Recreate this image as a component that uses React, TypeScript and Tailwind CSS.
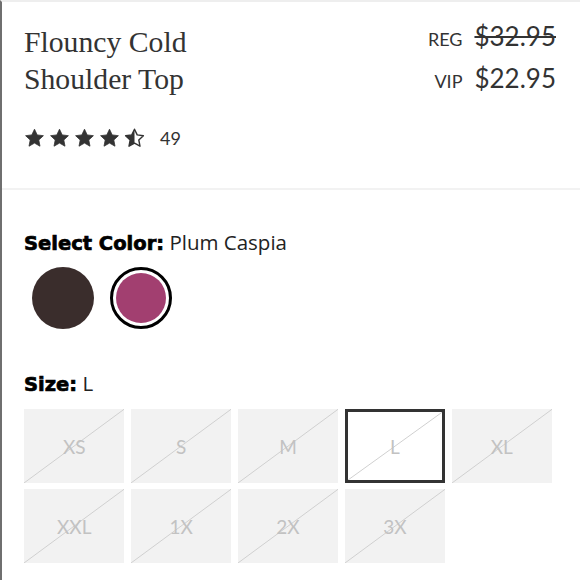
import React from "react";

const STAR = "M10 1.2l2.7 5.7 6.2.8-4.6 4.3 1.2 6.2L10 15.1l-5.5 3.1 1.2-6.2L1.1 7.7l6.2-.8z";

function Star({ half }: { half?: boolean }) {
  return (
    <svg width="21" height="20" viewBox="0 0 20 20" className="block">
      {half ? (
        <>
          <defs>
            <clipPath id="lefthalf">
              <rect x="0" y="0" width="10" height="20" />
            </clipPath>
          </defs>
          <path d={STAR} fill="none" stroke="#333" strokeWidth="1.4" strokeLinejoin="round" />
          <path d={STAR} fill="#333" clipPath="url(#lefthalf)" />
        </>
      ) : (
        <path d={STAR} fill="#333" stroke="#333" strokeWidth="0.8" strokeLinejoin="round" />
      )}
    </svg>
  );
}

function SizeTile({ label, selected }: { label: string; selected?: boolean }) {
  return (
    <div
      className={
        selected
          ? "relative h-[74px] bg-white border-[3px] border-[#333] flex items-center justify-center"
          : "relative h-[74px] bg-[#f2f2f2] flex items-center justify-center"
      }
    >
      <svg className="absolute inset-0 w-full h-full" preserveAspectRatio="none" viewBox="0 0 100 100">
        <line x1="0" y1="100" x2="100" y2="0" stroke="#d0d0d0" strokeWidth="1" vectorEffect="non-scaling-stroke" />
      </svg>
      <span className="relative text-[19px] font-normal text-[#c2c2c2] leading-none font-['Lato',sans-serif]">{label}</span>
    </div>
  );
}

export default function App() {
  const sizes = ["XS", "S", "M", "L", "XL", "XXL", "1X", "2X", "3X"];
  return (
    <div className="w-[580px] h-[580px] bg-white border-l-2 border-l-[#6f6f6f] border-t-2 border-t-[#eeeeee] overflow-hidden font-['Lato',sans-serif] text-[#333]">
      <div className="h-[188px] border-b-2 border-b-[#f2f2f2] flex justify-between pl-[22px] pr-[24px] pt-[22px]">
        <div>
          <h1 className="font-['Liberation_Serif',serif] text-[29.7px] leading-[37px] text-[#333] font-normal">
            Flouncy Cold
            <br />
            Shoulder Top
          </h1>
          <div className="mt-[30px] flex items-center">
            <div className="flex gap-[4px]">
              <Star />
              <Star />
              <Star />
              <Star />
              <Star half />
            </div>
            <span className="ml-[15px] text-[18px] leading-none">49</span>
          </div>
        </div>
        <div className="flex flex-col items-end -mt-[7px]">
          <div className="flex items-baseline gap-[12px] h-[30px]">
            <span className="text-[18px]">REG</span>
            <span className="text-[26px] line-through decoration-[1.5px]">$32.95</span>
          </div>
          <div className="flex items-baseline gap-[12px] mt-[12px]">
            <span className="text-[18px]">VIP</span>
            <span className="text-[26px]">$22.95</span>
          </div>
        </div>
      </div>

      <div className="pl-[22px] pr-[28px]">
        <div className="mt-[40px] text-[20.5px] leading-[24px] font-['Open_Sans',sans-serif] text-[#222]">
          <span className="font-bold font-['DejaVu_Sans',sans-serif] text-[19.5px] text-black [-webkit-text-stroke:0.7px_#000]">Select Color:</span>{" "}
          <span>Plum Caspia</span>
        </div>
        <div className="mt-[11px] flex gap-[16px] pl-[8px]">
          <div className="w-[62px] h-[62px] rounded-full bg-[#3a2d2c]" />
          <div className="w-[62px] h-[62px] rounded-full border-[3px] border-black p-[3px]">
            <div className="w-full h-full rounded-full bg-[#a23f70]" />
          </div>
        </div>
        <div className="mt-[42px] text-[20.5px] leading-[24px] font-['Open_Sans',sans-serif] text-[#222]">
          <span className="font-bold font-['DejaVu_Sans',sans-serif] text-[19.5px] text-black [-webkit-text-stroke:0.7px_#000]">Size:</span>{" "}
          <span>L</span>
        </div>
        <div className="mt-[12px] grid grid-cols-5 gap-x-[6.5px] gap-y-[6px]">
          {sizes.map((s) => (
            <SizeTile key={s} label={s} selected={s === "L"} />
          ))}
        </div>
      </div>
    </div>
  );
}
